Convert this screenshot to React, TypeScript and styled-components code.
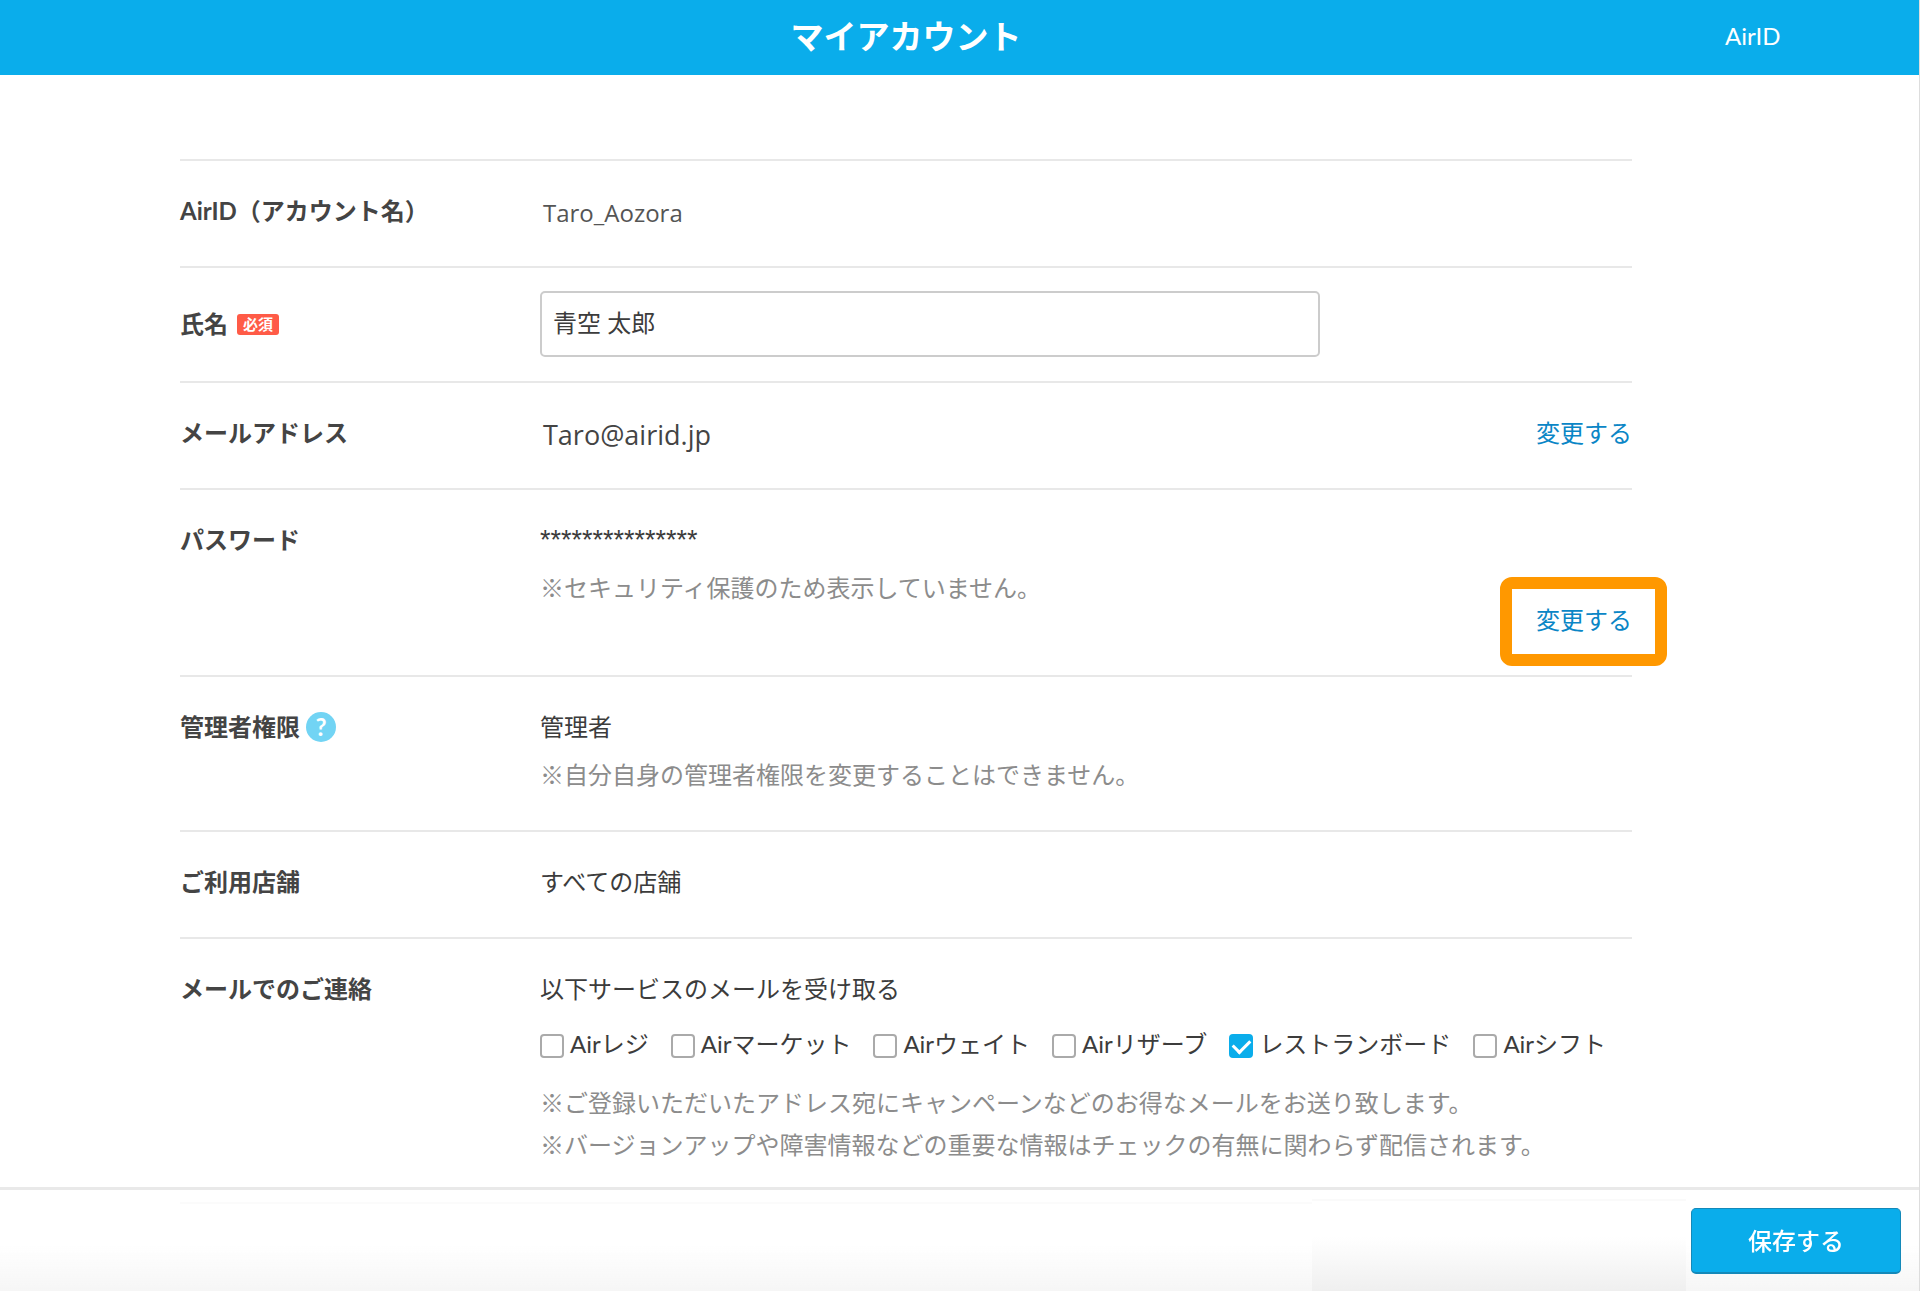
import React from 'react';
import styled, { createGlobalStyle } from 'styled-components';

const baseFont = `Lato, "Noto Sans CJK JP", sans-serif`;
const wideFont = `"Open Sans", "Noto Sans CJK JP", sans-serif`;

interface Service {
  id: string;
  name: string;
  checked?: boolean;
}

const services: Service[] = [
  { id: 'regi', name: 'Airレジ' },
  { id: 'market', name: 'Airマーケット' },
  { id: 'wait', name: 'Airウェイト' },
  { id: 'reserve', name: 'Airリザーブ' },
  { id: 'board', name: 'レストランボード', checked: true },
  { id: 'shift', name: 'Airシフト' },
];

const App: React.FC = () => {
  return (
    <Page>
      <GlobalStyle />
      <Header>
        <Title>マイアカウント</Title>
        <HeaderLink href="#airid">AirID</HeaderLink>
      </Header>
      <Main>
        <List>
          <Row>
            <Term>AirID（アカウント名）</Term>
            <Value>
              <AccountName>Taro_Aozora</AccountName>
            </Value>
          </Row>
          <Row $compact>
            <Term>
              <label htmlFor="fullname">氏名</label>
              <Required>必須</Required>
            </Term>
            <Value>
              <TextInput id="fullname" type="text" defaultValue="青空 太郎" />
            </Value>
          </Row>
          <Row>
            <Term>メールアドレス</Term>
            <Value>
              <MailAddress>Taro@airid.jp</MailAddress>
            </Value>
            <Action>
              <ChangeLink href="#mail">変更する</ChangeLink>
            </Action>
          </Row>
          <Row>
            <Term>パスワード</Term>
            <Value>
              <Secret>***************</Secret>
              <Note>※セキュリティ保護のため表示していません。</Note>
            </Value>
            <Action $low>
              <ChangeLink href="#password" $marked>変更する</ChangeLink>
            </Action>
          </Row>
          <Row>
            <Term>
              管理者権限
              <Help type="button" aria-label="管理者権限について">?</Help>
            </Term>
            <Value>
              <Text>管理者</Text>
              <Note>※自分自身の管理者権限を変更することはできません。</Note>
            </Value>
          </Row>
          <Row>
            <Term>ご利用店舗</Term>
            <Value>
              <Text>すべての店舗</Text>
            </Value>
          </Row>
          <Row>
            <Term>メールでのご連絡</Term>
            <Value>
              <Text>以下サービスのメールを受け取る</Text>
              <Services>
                {services.map(service => (
                  <ServiceLabel key={service.id} htmlFor={service.id}>
                    <Checkbox id={service.id} type="checkbox" defaultChecked={service.checked} />
                    {service.name}
                  </ServiceLabel>
                ))}
              </Services>
              <Notes>
                ※ご登録いただいたアドレス宛にキャンペーンなどのお得なメールをお送り致します。
                <br />
                ※バージョンアップや障害情報などの重要な情報はチェックの有無に関わらず配信されます。
              </Notes>
            </Value>
          </Row>
        </List>
      </Main>
      <Footer>
        <FooterShade />
        <SaveButton type="submit">保存する</SaveButton>
      </Footer>
    </Page>
  );
}

const GlobalStyle = createGlobalStyle`
  * {
    box-sizing: border-box;
  }
  body {
    margin: 0;
    background: #fff;
    color: #3c3c3c;
    font-family: ${baseFont};
    font-size: 24px;
    line-height: 38px;
  }
`;

const Page = styled.div`
  min-height: 100vh;
  border-right: 1px solid #ddd;
`;

const Header = styled.header`
  display: grid;
  grid-template-columns: 180px 1fr 287px;
  align-items: center;
  height: 75px;
  padding-bottom: 3px;
  background: #0aadeb;
  color: #fff;
`;

const Title = styled.h1`
  grid-column: 2;
  margin: 0;
  font-size: 33px;
  font-weight: 700;
  text-align: center;
`;

const HeaderLink = styled.a`
  padding-left: 93px;
  color: #fff;
  text-decoration: none;
`;

const Main = styled.main`
  padding: 84px 287px 0 180px;
`;

const List = styled.dl`
  margin: 0;
  border-bottom: 2px solid #e8e8e8;
`;

const Row = styled.div<{ $compact?: boolean }>`
  display: flex;
  align-items: ${({ $compact }) => ($compact ? 'center' : 'flex-start')};
  padding: ${({ $compact }) => ($compact ? '23px 0 24px' : '31px 0 36px')};
  border-top: 2px solid #e8e8e8;
`;

const Term = styled.dt`
  display: flex;
  align-items: center;
  flex: 0 0 360px;
  font-weight: 700;
  color: #444;
`;

const Value = styled.dd`
  flex: 1;
  margin: 0;
`;

const Text = styled.p`
  margin: 0;
`;

const AccountName = styled(Text)`
  padding: 4px 3px 0;
  line-height: 34px;
  font-family: ${wideFont};
  color: #555;
`;

const MailAddress = styled(AccountName)`
  font-size: 27px;
  color: #444;
`;

const Secret = styled(Text)`
  font-family: "Liberation Sans", sans-serif;
  font-size: 27px;
`;

const Note = styled.p`
  margin: 10px 0 0;
  color: #8c8c8c;
`;

const Notes = styled(Note)`
  margin-top: 19px;
  line-height: 42px;
`;

const Action = styled.dd<{ $low?: boolean }>`
  margin: 0;
  padding-top: ${({ $low }) => ($low ? '80px' : '0')};
`;

const ChangeLink = styled.a<{ $marked?: boolean }>`
  position: relative;
  display: block;
  color: #0a86c6;
  text-decoration: none;

  /* highlight frame around the link */
  &::after {
    content: '';
    display: ${({ $marked }) => ($marked ? 'block' : 'none')};
    position: absolute;
    inset: -24px -35px -27px -36px;
    border: 12px solid #ff9800;
    border-radius: 12px;
  }
`;

const Required = styled.span`
  margin-left: 9px;
  padding: 0 6px;
  border-radius: 3px;
  background: #ff5b47;
  color: #fff;
  font-size: 15px;
  line-height: 21px;
`;

const TextInput = styled.input`
  display: block;
  width: 100%;
  max-width: 780px;
  height: 66px;
  padding: 0 11px 5px;
  border: 2px solid #ccc;
  border-radius: 5px;
  background: #fff;
  color: #3c3c3c;
  font-family: inherit;
  font-size: 24px;
`;

const Help = styled.button`
  width: 30px;
  height: 30px;
  margin-left: 6px;
  padding: 0;
  border: 0;
  border-radius: 50%;
  background: #72d4f4;
  color: #fff;
  font-family: inherit;
  font-size: 24px;
  font-weight: 700;
  line-height: 30px;
`;

const Services = styled.div`
  display: flex;
  flex-wrap: wrap;
  column-gap: 22px;
  margin-top: 17px;
`;

const ServiceLabel = styled.label`
  display: flex;
  align-items: center;
  gap: 6px;
`;

const Checkbox = styled.input`
  appearance: none;
  display: grid;
  place-items: center;
  width: 24px;
  height: 24px;
  margin: 3px 0 0;
  border: 2px solid #aaa;
  border-radius: 4px;
  background: #fff;

  &:checked {
    border-color: #0aadeb;
    background: #0aadeb;
  }

  &:checked::after {
    content: '';
    width: 8px;
    height: 14px;
    margin-bottom: 5px;
    border: solid #fff;
    border-width: 0 3px 3px 0;
    transform: rotate(45deg);
  }
`;

const Footer = styled.footer`
  position: fixed;
  right: 1px;
  bottom: 0;
  left: 0;
  display: flex;
  justify-content: flex-end;
  align-items: flex-end;
  gap: 5px;
  padding-right: 18px;
  border-top: 3px solid #e9e9e9;
  background: linear-gradient(rgba(255, 255, 255, 0.8) 55%, rgba(245, 245, 245, 0.9));
`;

const FooterShade = styled.div`
  flex: 0 1 374px;
  height: 92px;
  margin-top: 9px;
  border-top: 2px solid #fafafa;
  background: linear-gradient(#fff 40%, #efefef);
`;

const SaveButton = styled.button`
  width: 210px;
  height: 66px;
  margin-bottom: 17px;
  padding: 0 0 3px;
  border: 1px solid #1489b9;
  border-bottom-width: 2px;
  border-radius: 5px;
  background: #0aadeb;
  color: #fff;
  font-family: inherit;
  font-size: 24px;
  font-weight: 500;
`;

export default App;
